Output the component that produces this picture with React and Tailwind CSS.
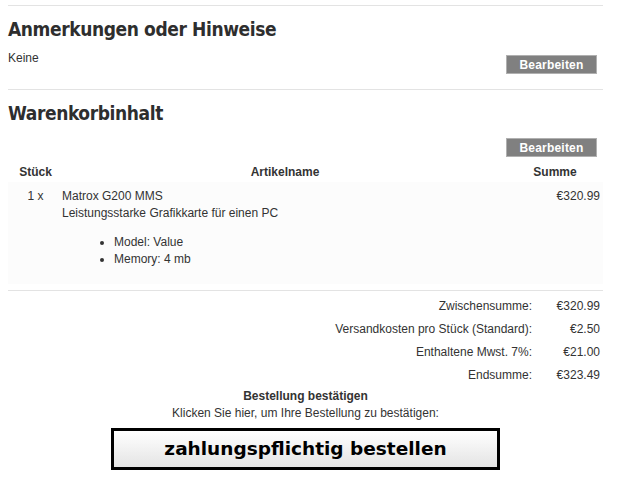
import React from "react";

const totals = [
  { label: "Zwischensumme:", value: "€320.99" },
  { label: "Versandkosten pro Stück (Standard):", value: "€2.50" },
  { label: "Enthaltene Mwst. 7%:", value: "€21.00" },
  { label: "Endsumme:", value: "€323.49" },
];

const headingFont = {
  fontFamily: '"DejaVu Sans Condensed", "DejaVu Sans", Verdana, sans-serif',
};

const EditButton = () => (
  <button className="w-[91px] h-[19px] bg-[#808080] border border-[#b0b0b0] text-white text-[12px] font-bold leading-none tracking-[0.2px]">
    Bearbeiten
  </button>
);

const App = () => {
  return (
    <div
      className="w-[617px] h-[489px] bg-white text-[#333] text-[12px] pt-[5px]"
      style={{ fontFamily: '"Liberation Sans", Arial, sans-serif' }}
    >
      <div className="mx-[8px] w-[595px]">
        {/* Anmerkungen */}
        <div className="border-t border-[#e3e3e3]">
          <h2
            className="text-[19px] font-bold leading-none mt-[14px] text-[#2e2e2e] tracking-[-0.4px]"
            style={headingFont}
          >
            Anmerkungen oder Hinweise
          </h2>
          <div className="flex justify-between items-start mt-[12px] h-[38px]">
            <p className="leading-[14px]">Keine</p>
            <div className="mr-[6px] mt-[4px]">
              <EditButton />
            </div>
          </div>
        </div>

        {/* Warenkorb */}
        <div className="border-t border-[#e3e3e3]">
          <h2
            className="text-[19px] font-bold leading-none mt-[14px] text-[#2e2e2e] tracking-[-0.4px]"
            style={headingFont}
          >
            Warenkorbinhalt
          </h2>
          <div className="flex justify-end mt-[15px] mr-[6px]">
            <EditButton />
          </div>

          <div className="flex font-bold h-[21px] items-center mt-[4px]">
            <div className="w-[55px] text-center">Stück</div>
            <div className="w-[444px] text-center">Artikelname</div>
            <div className="w-[96px] text-center">Summe</div>
          </div>

          <div className="flex bg-[#fcfcfc] h-[102px] pt-[7px]">
            <div className="w-[55px] text-center leading-[14px]">1 x</div>
            <div className="w-[444px] -ml-[1px]">
              <p className="leading-[14px]">Matrox G200 MMS</p>
              <p className="leading-[14px] mt-[3px]">
                Leistungsstarke Grafikkarte für einen PC
              </p>
              <ul className="list-disc ml-[52px] mt-[14px]">
                <li className="leading-[17px]">Model: Value</li>
                <li className="leading-[17px]">Memory: 4 mb</li>
              </ul>
            </div>
            <div className="w-[97px] text-right pr-[3px] leading-[14px]">
              €320.99
            </div>
          </div>

          <div className="border-t border-[#e3e3e3] mt-[6px] pt-[3px]">
            {totals.map((t) => (
              <div key={t.label} className="flex justify-end h-[23px] items-center">
                <span className="text-right">{t.label}</span>
                <span className="w-[71px] text-right pr-[3px]">{t.value}</span>
              </div>
            ))}
          </div>

          <div className="text-center mt-[3px]">
            <p className="font-bold leading-[15px]">Bestellung bestätigen</p>
            <p className="leading-[15px] mt-[2px]">
              Klicken Sie hier, um Ihre Bestellung zu bestätigen:
            </p>
          </div>

          <div className="flex mt-[7px] ml-[103px]">
            <button
              className="w-[389px] h-[42px] border-[3px] border-black bg-gradient-to-b from-white to-[#e4e4e4] text-black text-[18.5px] font-bold"
              style={{ fontFamily: '"DejaVu Sans", Verdana, sans-serif' }}
            >
              zahlungspflichtig bestellen
            </button>
          </div>
        </div>
      </div>
    </div>
  );
};

export default App;
